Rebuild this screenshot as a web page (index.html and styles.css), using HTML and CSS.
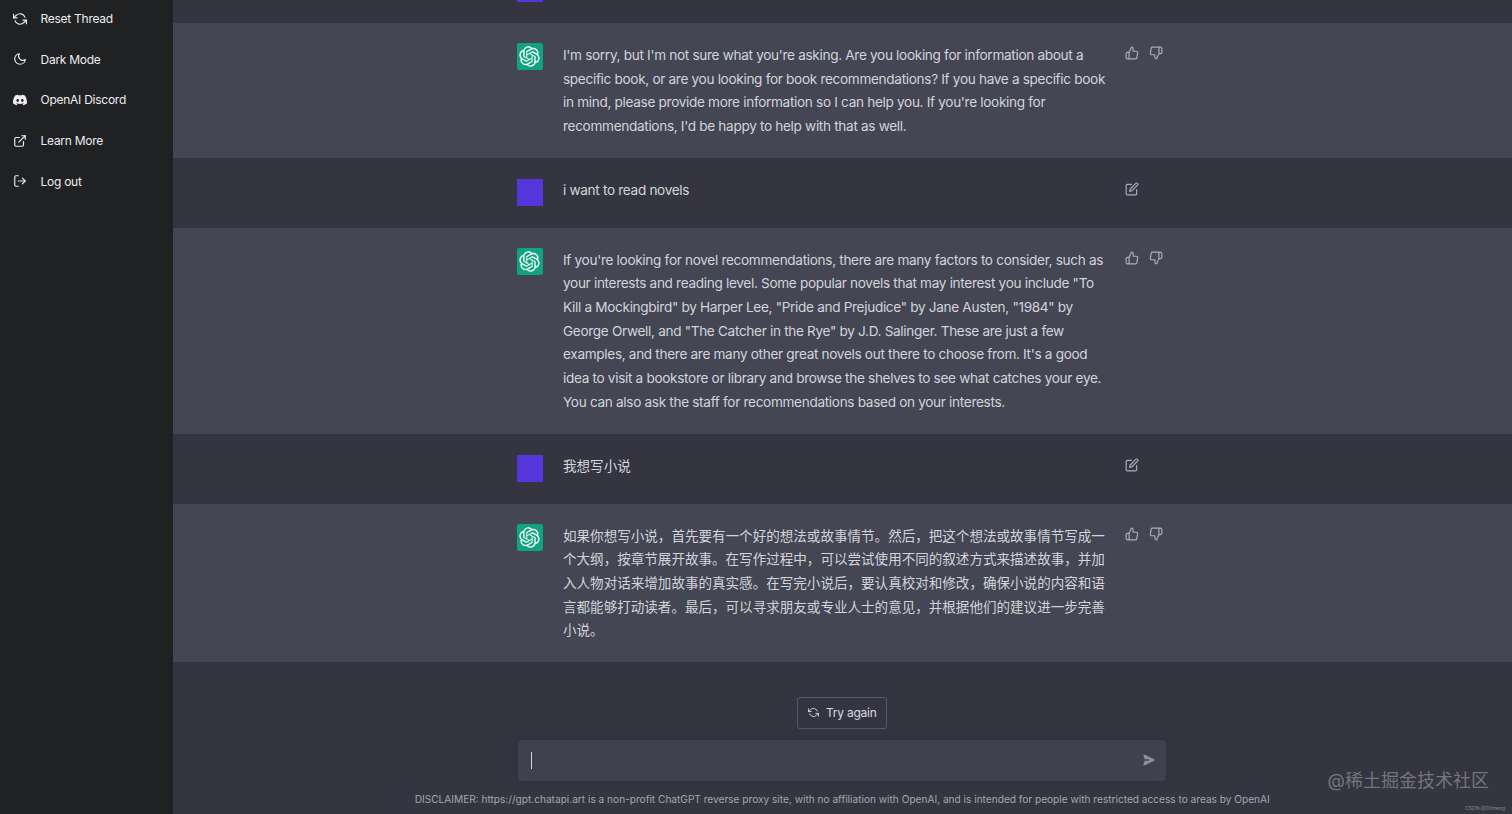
FILE: index.html
```html
<!DOCTYPE html>
<html lang="en">
<head>
  <meta charset="utf-8" />
  <meta name="viewport" content="width=device-width, initial-scale=1" />
  <title>ChatGPT</title>
  <link rel="stylesheet" href="styles.css">
</head>
<body>
  <svg class="defs" aria-hidden="true">
    <symbol id="i-refresh" viewBox="0 0 24 24"><polyline points="1 4 1 10 7 10"/><polyline points="23 20 23 14 17 14"/><path d="M20.49 9A9 9 0 0 0 5.64 5.64L1 10m22 4l-4.64 4.36A9 9 0 0 1 3.51 15"/></symbol>
    <symbol id="i-moon" viewBox="0 0 24 24"><path d="M21 12.79A9 9 0 1 1 11.21 3 7 7 0 0 0 21 12.79z"/></symbol>
    <symbol id="i-external" viewBox="0 0 24 24"><path d="M18 13v6a2 2 0 0 1-2 2H5a2 2 0 0 1-2-2V8a2 2 0 0 1 2-2h6"/><polyline points="15 3 21 3 21 9"/><line x1="10" y1="14" x2="21" y2="3"/></symbol>
    <symbol id="i-logout" viewBox="0 0 24 24"><path d="M9 21H5a2 2 0 0 1-2-2V5a2 2 0 0 1 2-2h4"/><polyline points="16 17 21 12 16 7"/><line x1="21" y1="12" x2="9" y2="12"/></symbol>
    <symbol id="i-up" viewBox="0 0 24 24"><path d="M14 9V5a3 3 0 0 0-3-3l-4 9v11h11.28a2 2 0 0 0 2-1.7l1.38-9a2 2 0 0 0-2-2.3zM7 22H4a2 2 0 0 1-2-2v-7a2 2 0 0 1 2-2h3"/></symbol>
    <symbol id="i-down" viewBox="0 0 24 24"><path d="M10 15v4a3 3 0 0 0 3 3l4-9V2H5.72a2 2 0 0 0-2 1.7l-1.38 9a2 2 0 0 0 2 2.3zm7-13h2.67A2.31 2.31 0 0 1 22 4v7a2.31 2.31 0 0 1-2.33 2H17"/></symbol>
    <symbol id="i-edit" viewBox="0 0 24 24"><path d="M11 4H4a2 2 0 0 0-2 2v14a2 2 0 0 0 2 2h14a2 2 0 0 0 2-2v-7"/><path d="M18.5 2.5a2.121 2.121 0 0 1 3 3L12 15l-4 1 1-4 9.5-9.5z"/></symbol>
    <symbol id="i-openai" viewBox="0 0 41 41"><path d="M37.5324 16.8707C37.9808 15.5241 38.1363 14.0974 37.9886 12.6859C37.8409 11.2744 37.3934 9.91076 36.676 8.68622C35.6126 6.83404 33.9882 5.3676 32.0373 4.4985C30.0864 3.62941 27.9098 3.40259 25.8215 3.85078C24.8796 2.7893 23.7219 1.94125 22.4257 1.36341C21.1295 0.785575 19.7249 0.491269 18.3058 0.500197C16.1708 0.495044 14.0893 1.16803 12.3614 2.42214C10.6335 3.67624 9.34853 5.44666 8.6917 7.47815C7.30085 7.76286 5.98686 8.3414 4.8377 9.17505C3.68854 10.0087 2.73073 11.0782 2.02839 12.312C0.956464 14.1591 0.498905 16.2988 0.721698 18.4228C0.944492 20.5467 1.83612 22.5449 3.268 24.1293C2.81966 25.4759 2.66413 26.9026 2.81182 28.3141C2.95951 29.7256 3.40701 31.0892 4.12437 32.3138C5.18791 34.1659 6.8123 35.6322 8.76321 36.5013C10.7141 37.3704 12.8907 37.5973 14.9789 37.1492C15.9208 38.2107 17.0786 39.0587 18.3747 39.6366C19.6709 40.2144 21.0755 40.5087 22.4946 40.4998C24.6307 40.5054 26.7133 39.8321 28.4418 38.5772C30.1704 37.3223 31.4556 35.5506 32.1119 33.5179C33.5027 33.2332 34.8167 32.6547 35.9659 31.821C37.115 30.9874 38.0728 29.9178 38.7752 28.684C39.8458 26.8371 40.3023 24.6979 40.0789 22.5748C39.8556 20.4517 38.9639 18.4544 37.5324 16.8707ZM22.4978 37.8849C20.7443 37.8874 19.0459 37.2733 17.6994 36.1501C17.7601 36.117 17.8666 36.0586 17.936 36.0161L25.9004 31.4156C26.1003 31.3019 26.2663 31.137 26.3813 30.9378C26.4964 30.7386 26.5563 30.5124 26.5549 30.2825V19.0542L29.9213 20.998C29.9389 21.0068 29.9541 21.0198 29.9656 21.0359C29.977 21.052 29.9842 21.0707 29.9867 21.0902V30.3889C29.9842 32.375 29.1946 34.2791 27.7909 35.6841C26.3872 37.0892 24.4838 37.8806 22.4978 37.8849ZM6.39227 31.0064C5.51397 29.4888 5.19742 27.7107 5.49804 25.9832C5.55718 26.0187 5.66048 26.0818 5.73461 26.1244L13.699 30.7248C13.8975 30.8408 14.1233 30.902 14.3532 30.902C14.583 30.902 14.8088 30.8408 15.0073 30.7248L24.731 25.1103V28.9979C24.7321 29.0177 24.7283 29.0376 24.7199 29.0556C24.7115 29.0736 24.6988 29.0893 24.6829 29.1012L16.6317 33.7497C14.9096 34.7416 12.8643 35.0097 10.9447 34.4954C9.02506 33.9811 7.38785 32.7263 6.39227 31.0064ZM4.29707 13.6194C5.17156 12.0998 6.55279 10.9364 8.19885 10.3327C8.19885 10.4013 8.19491 10.5228 8.19491 10.6071V19.808C8.19351 20.0378 8.25334 20.2638 8.36823 20.4629C8.48312 20.6619 8.64893 20.8267 8.84863 20.9404L18.5723 26.5542L15.206 28.4979C15.1894 28.5089 15.1703 28.5155 15.1505 28.5173C15.1307 28.5191 15.1107 28.516 15.0924 28.5082L7.04046 23.8557C5.32135 22.8601 4.06716 21.2235 3.55289 19.3046C3.03862 17.3858 3.30624 15.3413 4.29707 13.6194ZM31.955 20.0556L22.2312 14.4411L25.5976 12.4981C25.6142 12.4872 25.6333 12.4805 25.6531 12.4787C25.6729 12.4769 25.6928 12.4801 25.7111 12.4879L33.7631 17.1364C34.9967 17.849 36.0017 18.8982 36.6606 20.1613C37.3194 21.4244 37.6047 22.849 37.4832 24.2684C37.3617 25.6878 36.8382 27.0432 35.9743 28.1759C35.1103 29.3086 33.9415 30.1717 32.6047 30.6641C32.6047 30.5947 32.6047 30.4733 32.6047 30.3889V21.188C32.6066 20.9586 32.5474 20.7328 32.4332 20.5338C32.319 20.3348 32.154 20.1698 31.955 20.0556ZM35.3055 15.0128C35.2464 14.9765 35.1431 14.9142 35.069 14.8717L27.1045 10.2712C26.906 10.1554 26.6803 10.0943 26.4504 10.0943C26.2206 10.0943 25.9948 10.1554 25.7963 10.2712L16.0726 15.8858V11.9982C16.0715 11.9783 16.0753 11.9585 16.0837 11.9405C16.0921 11.9225 16.1048 11.9068 16.1207 11.8949L24.1719 7.25025C25.4053 6.53903 26.8158 6.19376 28.2383 6.25482C29.6608 6.31589 31.0364 6.78077 32.2044 7.59508C33.3723 8.40939 34.2842 9.53945 34.8334 10.8531C35.3826 12.1667 35.5464 13.6095 35.3055 15.0128ZM14.2424 21.9419L10.8752 19.9981C10.8576 19.9893 10.8423 19.9763 10.8309 19.9602C10.8195 19.9441 10.8122 19.9254 10.8098 19.9058V10.6071C10.8107 9.18295 11.2173 7.78848 11.9819 6.58696C12.7466 5.38544 13.8377 4.42659 15.1275 3.82264C16.4173 3.21869 17.8524 2.99464 19.2649 3.1767C20.6775 3.35876 22.0089 3.93941 23.1034 4.85067C23.0427 4.88379 22.937 4.94215 22.8668 4.98473L14.9024 9.58517C14.7025 9.69878 14.5366 9.86356 14.4215 10.0626C14.3065 10.2616 14.2466 10.4877 14.2479 10.7175L14.2424 21.9419ZM16.071 17.9991L20.4018 15.4978L24.7325 17.9975V22.9985L20.4018 25.4983L16.071 22.9985V17.9991Z"/></symbol>
  </svg>

  <aside class="sidebar">
    <a class="side-link"><svg class="icon"><use href="#i-refresh"/></svg>Reset Thread</a>
    <a class="side-link"><svg class="icon"><use href="#i-moon"/></svg>Dark Mode</a>
    <a class="side-link">
      <svg class="icon solid" viewBox="0 0 24 24"><path d="M20.317 4.3698a19.7913 19.7913 0 00-4.8851-1.5152.0741.0741 0 00-.0785.0371c-.211.3753-.4447.8648-.6083 1.2495-1.8447-.2762-3.68-.2762-5.4868 0-.1636-.3933-.4058-.8742-.6177-1.2495a.077.077 0 00-.0785-.037 19.7363 19.7363 0 00-4.8852 1.515.0699.0699 0 00-.0321.0277C.5334 9.0458-.319 13.5799.0992 18.0578a.0824.0824 0 00.0312.0561c2.0528 1.5076 4.0413 2.4228 5.9929 3.0294a.0777.0777 0 00.0842-.0276c.4616-.6304.8731-1.2952 1.226-1.9942a.076.076 0 00-.0416-.1057c-.6528-.2476-1.2743-.5495-1.8722-.8923a.077.077 0 01-.0076-.1277c.1258-.0943.2517-.1923.3718-.2914a.0743.0743 0 01.0776-.0105c3.9278 1.7933 8.18 1.7933 12.0614 0a.0739.0739 0 01.0785.0095c.1202.099.246.1981.3728.2924a.077.077 0 01-.0066.1276 12.2986 12.2986 0 01-1.873.8914.0766.0766 0 00-.0407.1067c.3604.698.7719 1.3628 1.225 1.9932a.076.076 0 00.0842.0286c1.961-.6067 3.9495-1.5219 6.0023-3.0294a.077.077 0 00.0313-.0552c.5004-5.177-.8382-9.6739-3.5485-13.6604a.061.061 0 00-.0312-.0286zM8.02 15.3312c-1.1825 0-2.1569-1.0857-2.1569-2.419 0-1.3332.9555-2.4189 2.157-2.4189 1.2108 0 2.1757 1.0952 2.1568 2.419 0 1.3332-.9555 2.4189-2.1569 2.4189zm7.9748 0c-1.1825 0-2.1569-1.0857-2.1569-2.419 0-1.3332.9554-2.4189 2.1569-2.4189 1.2108 0 2.1757 1.0952 2.1568 2.419 0 1.3332-.946 2.4189-2.1568 2.4189Z"/></svg>
      OpenAI Discord
    </a>
    <a class="side-link"><svg class="icon"><use href="#i-external"/></svg>Learn More</a>
    <a class="side-link"><svg class="icon"><use href="#i-logout"/></svg>Log out</a>
  </aside>

  <main class="main">
    <div class="thread">
      <div class="row user cut">
        <div class="row-inner"><div class="avatar purple"></div></div>
      </div>

      <div class="row bot">
        <div class="row-inner">
          <div class="avatar green"><svg class="logo"><use href="#i-openai"/></svg></div>
          <div class="text">I'm sorry, but I'm not sure what you're asking. Are you looking for information about a specific book, or are you looking for book recommendations? If you have a specific book in mind, please provide more information so I can help you. If you're looking for recommendations, I'd be happy to help with that as well.</div>
          <div class="actions">
            <svg class="icon small"><use href="#i-up"/></svg>
            <svg class="icon small"><use href="#i-down"/></svg>
          </div>
        </div>
      </div>

      <div class="row user">
        <div class="row-inner">
          <div class="avatar purple"></div>
          <div class="text">i want to read novels</div>
          <div class="actions"><svg class="icon small"><use href="#i-edit"/></svg></div>
        </div>
      </div>

      <div class="row bot">
        <div class="row-inner">
          <div class="avatar green"><svg class="logo"><use href="#i-openai"/></svg></div>
          <div class="text">If you're looking for novel recommendations, there are many factors to consider, such as your interests and reading level. Some popular novels that may interest you include "To Kill a Mockingbird" by Harper Lee, "Pride and Prejudice" by Jane Austen, "1984" by George Orwell, and "The Catcher in the Rye" by J.D. Salinger. These are just a few examples, and there are many other great novels out there to choose from. It's a good idea to visit a bookstore or library and browse the shelves to see what catches your eye. You can also ask the staff for recommendations based on your interests.</div>
          <div class="actions">
            <svg class="icon small"><use href="#i-up"/></svg>
            <svg class="icon small"><use href="#i-down"/></svg>
          </div>
        </div>
      </div>

      <div class="row user">
        <div class="row-inner">
          <div class="avatar purple"></div>
          <div class="text zh">我想写小说</div>
          <div class="actions"><svg class="icon small"><use href="#i-edit"/></svg></div>
        </div>
      </div>

      <div class="row bot">
        <div class="row-inner">
          <div class="avatar green"><svg class="logo"><use href="#i-openai"/></svg></div>
          <div class="text zh">如果你想写小说，首先要有一个好的想法或故事情节。然后，把这个想法或故事情节写成一个大纲，按章节展开故事。在写作过程中，可以尝试使用不同的叙述方式来描述故事，并加入人物对话来增加故事的真实感。在写完小说后，要认真校对和修改，确保小说的内容和语言都能够打动读者。最后，可以寻求朋友或专业人士的意见，并根据他们的建议进一步完善小说。</div>
          <div class="actions">
            <svg class="icon small"><use href="#i-up"/></svg>
            <svg class="icon small"><use href="#i-down"/></svg>
          </div>
        </div>
      </div>
    </div>

    <div class="composer">
      <button class="try-btn"><svg class="icon tiny"><use href="#i-refresh"/></svg>Try again</button>
      <div class="input-box">
        <span class="caret"></span>
        <svg class="send" viewBox="0 0 20 20"><path d="M10.894 2.553a1 1 0 00-1.788 0l-7 14a1 1 0 001.169 1.409l5-1.429A1 1 0 009 15.571V11a1 1 0 112 0v4.571a1 1 0 00.725.962l5 1.428a1 1 0 001.17-1.408l-7-14z"/></svg>
      </div>
      <p class="disclaimer">DISCLAIMER: https://gpt.chatapi.art is a non-profit ChatGPT reverse proxy site, with no affiliation with OpenAI, and is intended for people with restricted access to areas by OpenAI</p>
    </div>

    <div class="watermark">@稀土掘金技术社区</div>
    <div class="watermark-small">CSDN @Dlimeng</div>
  </main>
</body>
</html>
```

FILE: styles.css
```css
html, body {
  height: 100%;
}
body {
  margin: 0;
  display: flex;
  height: 814px;
  overflow: hidden;
  font-family: Inter, "Noto Sans CJK SC", sans-serif;
  background: #343541;
  color: #d1d5db;
}
.defs {
  display: none;
}

.sidebar {
  width: 172.5px;
  flex: none;
  margin-top: -1.5px;
  background: #202123;
  display: flex;
  flex-direction: column;
}
.side-link {
  display: flex;
  align-items: center;
  gap: 13.5px;
  height: 40.6px;
  padding-left: 13px;
  font-size: 12px;
  letter-spacing: -0.26px;
  color: #ececf1;
  box-sizing: border-box;
}

.icon {
  width: 14px;
  height: 14px;
  flex: none;
  fill: none;
  stroke: currentColor;
  stroke-width: 2;
  stroke-linecap: round;
  stroke-linejoin: round;
}
.icon.solid {
  fill: currentColor;
  stroke: none;
}
.icon.small {
  color: #acacbe;
}
.icon.tiny {
  width: 11px;
  height: 11px;
}

.main {
  flex: 1;
  position: relative;
  display: flex;
  flex-direction: column;
  min-width: 0;
}

.row-inner {
  display: flex;
  align-items: flex-start;
  width: 648px;
  margin-left: 344px;
  padding-top: 20px;
  padding-bottom: 20px;
}
.row.user {
  background: #343541;
}
.row.user .row-inner {
  padding-top: 21.5px;
  padding-bottom: 21.5px;
}
.row.user .actions {
  padding-top: 2.5px;
}
.row.bot {
  background: #444654;
}
.row.bot .row-inner {
  padding-bottom: 19.2px;
}
.row.bot .text {
  padding-top: 0.8px;
}
.row.cut {
  height: 23px;
  overflow: hidden;
}
.row.user.cut .row-inner {
  padding-top: 0;
}
.row.cut .avatar {
  margin-top: -25px;
}

.avatar {
  width: 26.5px;
  height: 27px;
  flex: none;
  display: flex;
  align-items: center;
  justify-content: center;
}
.avatar.purple {
  background: #5436da;
}
.avatar.green {
  background: #10a37f;
  border-radius: 2px;
}
.logo {
  width: 21px;
  height: 21px;
  fill: #fff;
}

.text {
  width: 544px;
  margin-left: 20px;
  flex: none;
  font-size: 13.6px;
  line-height: 23.7px;
  letter-spacing: -0.32px;
}
.text.zh {
  font-size: 13.55px;
  letter-spacing: 0;
}

.actions {
  display: flex;
  gap: 10px;
  margin-left: 18px;
  padding-top: 3px;
}

.composer {
  display: flex;
  flex-direction: column;
  align-items: center;
}
.try-btn {
  display: flex;
  align-items: center;
  gap: 7px;
  height: 32px;
  margin-top: 34.5px;
  padding: 0 9.5px;
  background: #343541;
  color: #d9d9e3;
  border: 1px solid #565869;
  border-radius: 3px;
  font-family: inherit;
  font-size: 12px;
  letter-spacing: -0.22px;
}
.input-box {
  display: flex;
  align-items: center;
  justify-content: space-between;
  width: 648px;
  height: 41px;
  margin-top: 11px;
  padding: 0 10px 0 13px;
  box-sizing: border-box;
  background: #40414f;
  border-radius: 4px;
  box-shadow: 0 0 12px rgba(0,0,0,0.1);
}
.caret {
  width: 1px;
  height: 17px;
  background: #d1d5db;
}
.send {
  width: 14px;
  height: 14px;
  fill: #8e8ea0;
  transform: rotate(90deg);
}
.disclaimer {
  margin: 11px 0 0;
  font-size: 10.12px;
  line-height: 14px;
  color: #a3a5ae;
  white-space: nowrap;
}

.watermark {
  position: absolute;
  right: 23px;
  bottom: 22px;
  font-size: 18px;
  color: rgba(255,255,255,0.33);
}
.watermark-small {
  position: absolute;
  right: 7px;
  bottom: 3px;
  font-size: 5px;
  color: rgba(255,255,255,0.4);
}
```
